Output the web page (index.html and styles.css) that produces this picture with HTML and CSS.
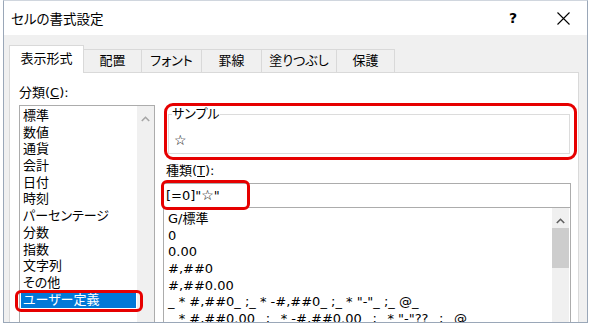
FILE: index.html
```html
<!DOCTYPE html>
<html lang="ja">
<head>
    <meta charset="UTF-8">
    <title>セルの書式設定</title>
    <link rel="stylesheet" href="styles.css">
</head>
<body>
    <div id="dialog">
        <div class="titlebar">
            <span class="title">セルの書式設定</span>
            <span class="help">?</span>
            <span class="close">
                <svg width="13" height="13" viewBox="0 0 13 13"><path d="M0.5 0.5L12.5 12.5M12.5 0.5L0.5 12.5" stroke="#000" stroke-width="1.1" fill="none"/></svg>
            </span>
        </div>

        <div class="content">
            <div class="tabs">
                <div class="tab active">表示形式</div>
                <div class="tab tab-s">配置</div>
                <div class="tab tab-m">フォント</div>
                <div class="tab tab-m">罫線</div>
                <div class="tab tab-l">塗りつぶし</div>
                <div class="tab tab-s">保護</div>
            </div>

            <div class="panel">
                <div class="col-left">
                    <div class="label">分類(<u>C</u>):</div>
                    <div class="listbox cat-list">
                        <ul>
                            <li>標準</li>
                            <li>数値</li>
                            <li>通貨</li>
                            <li>会計</li>
                            <li>日付</li>
                            <li>時刻</li>
                            <li>パーセンテージ</li>
                            <li>分数</li>
                            <li>指数</li>
                            <li>文字列</li>
                            <li>その他</li>
                            <li class="selected">ユーザー定義<span class="mark mark-sel"></span></li>
                        </ul>
                        <div class="vscroll">
                            <svg class="arrow" width="9" height="6" viewBox="0 0 9 6"><path d="M0.8 5L4.5 1.3L8.2 5" stroke="#a6a6a6" stroke-width="1.6" fill="none"/></svg>
                        </div>
                    </div>
                </div>

                <div class="col-right">
                    <div class="mark-box">
                        <fieldset class="sample">
                            <legend>サンプル</legend>
                            <div class="sample-value">☆</div>
                        </fieldset>
                    </div>

                    <div class="label">種類(<u>T</u>):</div>
                    <div class="textbox">[=0]"<span class="star">☆</span>"<span class="mark mark-input"></span></div>

                    <div class="listbox fmt-list">
                        <ul>
                            <li>G/標準</li>
                            <li>0</li>
                            <li>0.00</li>
                            <li>#,##0</li>
                            <li>#,##0.00</li>
                            <li>_ * #,##0_ ;_ * -#,##0_ ;_ * "-"_ ;_ @_</li>
                            <li>_ * #,##0.00_ ;_ * -#,##0.00_ ;_ * "-"??_ ;_ @_</li>
                        </ul>
                        <div class="vscroll">
                            <svg class="arrow" width="9" height="6" viewBox="0 0 9 6"><path d="M0.8 5L4.5 1.3L8.2 5" stroke="#606060" stroke-width="1.6" fill="none"/></svg>
                            <div class="thumb"></div>
                        </div>
                    </div>
                </div>
            </div>
        </div>
    </div>
</body>
</html>
```

FILE: styles.css
```css
* {
    box-sizing: border-box;
}
body {
    margin: 0;
    width: 590px;
    height: 324px;
    overflow: hidden;
    background-color: #ffffff;
    font-family: "DejaVu Sans", "Noto Sans CJK JP", sans-serif;
    font-feature-settings: "palt";
    font-size: 13px;
    color: #000;
}
#dialog {
    margin-left: 3px;
    width: 585px;
    height: 323px;
    border: 1px solid #9aa7b8;
    border-top-color: #d0d6de;
    background-color: #f0f0f0;
    display: flex;
    flex-direction: column;
    overflow: hidden;
}
.titlebar {
    height: 34px;
    background-color: #fff;
    display: flex;
    align-items: center;
    padding-left: 7px;
    flex-shrink: 0;
}
.title {
    font-size: 13.5px;
    flex: 1;
}
.help {
    font-size: 14px;
    font-weight: bold;
    width: 16px;
    margin-right: 36px;
    text-align: center;
}
.close {
    width: 13px;
    height: 13px;
    margin-right: 17px;
    display: flex;
}
.content {
    flex: 1;
    display: flex;
    flex-direction: column;
    min-height: 0;
}
.tabs {
    display: flex;
    align-items: flex-end;
    margin: 10px 0 0 5px;
    height: 27px;
    position: relative;
    z-index: 1;
}
.tab {
    height: 23px;
    line-height: 22px;
    border: 1px solid #d9d9d9;
    border-bottom: none;
    margin-left: -1px;
    background-color: #f0f0f0;
    white-space: nowrap;
    text-align: center;
}
.tab-s {
    width: 59px;
}
.tab-m {
    width: 61px;
}
.tab-l {
    width: 76px;
}
.tab.active {
    width: 75px;
    height: 28px;
    line-height: 26px;
    margin-left: 0;
    margin-bottom: -1px;
    background-color: #fff;
}
.panel {
    flex: 1;
    min-height: 0;
    margin: 0 8px 0 5px;
    background-color: #fff;
    border: 1px solid #d9d9d9;
    border-bottom: none;
    padding: 12px 6px 0 9px;
    display: flex;
    gap: 8px;
}
.col-left {
    width: 136px;
    display: flex;
    flex-direction: column;
}
.col-right {
    width: 408px;
    display: flex;
    flex-direction: column;
}
.label {
    line-height: 16px;
    height: 16px;
    white-space: nowrap;
}
.col-left .label {
    margin-bottom: 4px;
}
.listbox {
    flex: 1;
    display: flex;
    border: 1px solid #acacac;
    border-bottom: none;
    min-height: 0;
}
.listbox ul {
    flex: 1;
    list-style: none;
    margin: 0;
    padding: 2px 0 0;
    min-width: 0;
}
.listbox li {
    height: 16.7px;
    line-height: 16.7px;
    padding-left: 2px;
    margin: 0 1px;
    white-space: nowrap;
    position: relative;
}
.listbox li.selected {
    background-color: #0078d7;
    color: #fff;
}
.vscroll {
    width: 17px;
    background-color: #f0f0f0;
    display: flex;
    flex-direction: column;
    align-items: center;
}
.arrow {
    margin-top: 10px;
    flex-shrink: 0;
}
.thumb {
    margin-top: 4px;
    width: 17px;
    height: 40px;
    background-color: #cdcdcd;
}
.mark {
    position: absolute;
    border: 3px solid #e60000;
    border-radius: 6px;
    pointer-events: none;
}
.mark-sel {
    left: -6px;
    top: -2px;
    width: 128px;
    height: 22px;
}
.mark-box {
    margin: 18px -6px 0 1px;
    height: 57px;
    border: 3px solid #e60000;
    border-radius: 9px;
    padding: 0 4px 0 1px;
}
.sample {
    margin: 0;
    padding: 0 0 0 5px;
    height: 48px;
    border: 1px solid #dcdcdc;
}
.sample legend {
    padding: 0;
    margin-left: -2px;
    line-height: 16px;
}
.sample-value {
    font-size: 14px;
    line-height: 16px;
    margin-top: 10px;
}
.star {
    font-size: 14px;
}
.col-right .label {
    margin-top: 3px;
    padding-left: 3px;
}
.textbox {
    position: relative;
    margin-top: 4px;
    height: 25px;
    line-height: 23px;
    border: 1px solid #acacac;
    padding-left: 2px;
}
.mark-input {
    left: -3px;
    top: -4px;
    width: 89px;
    height: 30px;
}
.fmt-list {
    border-top: none;
}
.fmt-list ul {
    padding-top: 3px;
}
.fmt-list li {
    padding-left: 3px;
}
.fmt-list .vscroll {
    margin-right: 1px;
}
```
